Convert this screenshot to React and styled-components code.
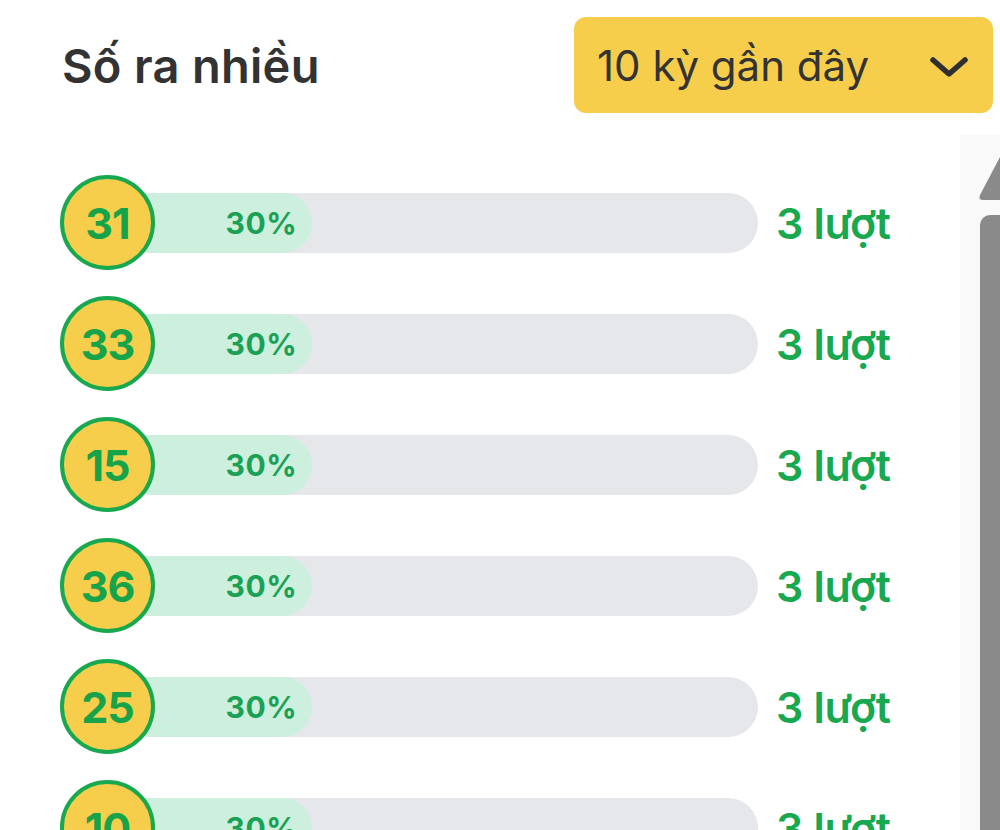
import React from "react";
import styled, { createGlobalStyle } from "styled-components";

const GlobalStyle = createGlobalStyle`
  html, body {
    margin: 0;
    padding: 0;
    background: #ffffff;
    height: 830px;
    overflow: hidden;
  }
  body {
    font-family: Inter, "Noto Sans", "Liberation Sans", sans-serif;
  }
`;

const rows = [
  { num: 31, pct: 30, count: 3 },
  { num: 33, pct: 30, count: 3 },
  { num: 15, pct: 30, count: 3 },
  { num: 36, pct: 30, count: 3 },
  { num: 25, pct: 30, count: 3 },
  { num: 10, pct: 30, count: 3 },
];

const App = () => {
  return (
    <>
      <GlobalStyle />
      <Page>
        <Header>
          <Title>Số ra nhiều</Title>
          <Select>
            <span>10 kỳ gần đây</span>
            <svg width="40" height="24" viewBox="0 0 40 24" fill="none">
              <path
                d="M4 5 L20 19 L36 5"
                stroke="#2f2f2f"
                strokeWidth="5.5"
                strokeLinecap="round"
                strokeLinejoin="round"
              />
            </svg>
          </Select>
        </Header>
        <Body>
          <List>
            {rows.map((r) => (
              <Row key={r.num}>
                <Ball>{r.num}</Ball>
                <Bar>
                  <Fill style={{ width: `${r.pct}%` }}>{r.pct}%</Fill>
                </Bar>
                <Count>{r.count} lượt</Count>
              </Row>
            ))}
          </List>
          <ScrollTrack>
            <svg width="22" height="50" viewBox="0 0 22 50">
              <path d="M22 2 L2 40 Q0 45 5 45 L22 45 Z" fill="#8a8a8a" />
            </svg>
            <Thumb />
          </ScrollTrack>
        </Body>
      </Page>
    </>
  );
};

const Page = styled.div`
  height: 830px;
  padding: 17px 0 0 60px;
  box-sizing: border-box;
  display: flex;
  flex-direction: column;
  overflow: hidden;
`;

const Header = styled.div`
  display: flex;
  justify-content: space-between;
  align-items: center;
  height: 96px;
  padding-right: 7px;
`;

const Title = styled.h2`
  margin: 0 0 0 2px;
  font-size: 47px;
  font-weight: 600;
  color: #333333;
  letter-spacing: 0.3px;
`;

const Select = styled.div`
  width: 419px;
  height: 96px;
  box-sizing: border-box;
  background: #f7ce4b;
  border-radius: 12px;
  display: flex;
  align-items: center;
  justify-content: space-between;
  padding: 0 24px 0 23px;
  font-size: 42px;
  font-weight: 400;
  color: #333333;
  svg {
    margin-top: 4px;
  }
`;

const Body = styled.div`
  flex: 1;
  display: flex;
  margin-top: 22px;
  min-height: 0;
`;

const List = styled.div`
  flex: 1;
  padding-top: 27px;
  overflow: hidden;
`;

const Row = styled.div`
  display: flex;
  align-items: center;
  height: 121px;
`;

const Ball = styled.div`
  position: relative;
  z-index: 1;
  width: 95px;
  height: 95px;
  flex-shrink: 0;
  box-sizing: border-box;
  border: 4px solid #18a84f;
  border-radius: 50%;
  background: #f7ce4b;
  color: #16a34a;
  display: flex;
  align-items: center;
  justify-content: center;
  font-size: 43px;
  font-weight: 700;
  letter-spacing: -1px;
`;

const Bar = styled.div`
  width: 637px;
  height: 60px;
  margin-left: -34px;
  border-radius: 30px;
  background: #e6e7eb;
  overflow: hidden;
  display: flex;
`;

const Fill = styled.div`
  height: 100%;
  background: #cdefdd;
  border-radius: 30px;
  display: flex;
  align-items: center;
  justify-content: flex-end;
  padding-right: 15px;
  box-sizing: border-box;
  color: #1aa156;
  font-size: 30px;
  font-weight: 700;
  letter-spacing: 0.5px;
`;

const Count = styled.div`
  margin-left: 18px;
  color: #18a84f;
  font-size: 43px;
  font-weight: 600;
  letter-spacing: -0.3px;
  white-space: nowrap;
`;

const ScrollTrack = styled.div`
  width: 40px;
  background: #f9f9f9;
  display: flex;
  flex-direction: column;
  align-items: flex-end;
  padding-top: 20px;
  svg {
    display: block;
  }
`;

const Thumb = styled.div`
  margin-top: 10px;
  width: 20px;
  flex: 1;
  background: #8a8a8a;
  border-top-left-radius: 10px;
`;

export default App;
